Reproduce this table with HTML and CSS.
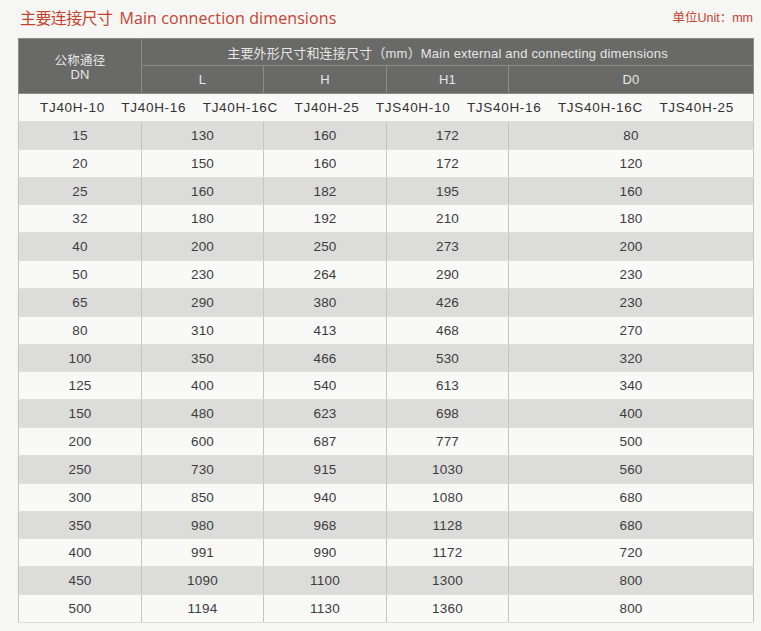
FILE: index.html
```html
<!DOCTYPE html>
<html lang="zh">
<head>
<meta charset="utf-8">
<title>主要连接尺寸</title>
<link rel="stylesheet" href="styles.css">
</head>
<body>
<div class="page">
  <div class="head">
    <h1 class="title"><span class="title-cn">主要连接尺寸</span><span class="title-en">Main connection dimensions</span></h1>
    <div class="unit">单位Unit：mm</div>
  </div>
  <table class="spec">
    <colgroup>
      <col class="c1"><col class="c2"><col class="c3"><col class="c4"><col class="c5">
    </colgroup>
    <thead>
      <tr class="h1row">
        <th rowspan="2" class="dn"><span class="dn-line">公称通径</span><span class="dn-line">DN</span></th>
        <th colspan="4">主要外形尺寸和连接尺寸（mm）Main external and connecting dimensions</th>
      </tr>
      <tr class="h2row">
        <th>L</th><th>H</th><th>H1</th><th>D0</th>
      </tr>
    </thead>
    <tbody>
      <tr class="models">
        <td colspan="5">
          <div class="model-list">
            <span>TJ40H-10</span><span>TJ40H-16</span><span>TJ40H-16C</span><span>TJ40H-25</span><span>TJS40H-10</span><span>TJS40H-16</span><span>TJS40H-16C</span><span>TJS40H-25</span>
          </div>
        </td>
      </tr>
      <tr class="odd"><td>15</td><td>130</td><td>160</td><td>172</td><td>80</td></tr>
      <tr><td>20</td><td>150</td><td>160</td><td>172</td><td>120</td></tr>
      <tr class="odd"><td>25</td><td>160</td><td>182</td><td>195</td><td>160</td></tr>
      <tr><td>32</td><td>180</td><td>192</td><td>210</td><td>180</td></tr>
      <tr class="odd"><td>40</td><td>200</td><td>250</td><td>273</td><td>200</td></tr>
      <tr><td>50</td><td>230</td><td>264</td><td>290</td><td>230</td></tr>
      <tr class="odd"><td>65</td><td>290</td><td>380</td><td>426</td><td>230</td></tr>
      <tr><td>80</td><td>310</td><td>413</td><td>468</td><td>270</td></tr>
      <tr class="odd"><td>100</td><td>350</td><td>466</td><td>530</td><td>320</td></tr>
      <tr><td>125</td><td>400</td><td>540</td><td>613</td><td>340</td></tr>
      <tr class="odd"><td>150</td><td>480</td><td>623</td><td>698</td><td>400</td></tr>
      <tr><td>200</td><td>600</td><td>687</td><td>777</td><td>500</td></tr>
      <tr class="odd"><td>250</td><td>730</td><td>915</td><td>1030</td><td>560</td></tr>
      <tr><td>300</td><td>850</td><td>940</td><td>1080</td><td>680</td></tr>
      <tr class="odd"><td>350</td><td>980</td><td>968</td><td>1128</td><td>680</td></tr>
      <tr><td>400</td><td>991</td><td>990</td><td>1172</td><td>720</td></tr>
      <tr class="odd"><td>450</td><td>1090</td><td>1100</td><td>1300</td><td>800</td></tr>
      <tr><td>500</td><td>1194</td><td>1130</td><td>1360</td><td>800</td></tr>
    </tbody>
  </table>
</div>
</body>
</html>
```

FILE: styles.css
```css
html, body {
  margin: 0;
  padding: 0;
  background: #f6f6f5;
}

.page {
  padding: 0 8px 0 18px;
  font-family: "Liberation Sans", Arial, "Noto Sans CJK SC", sans-serif;
  color: #3a3a3a;
}

.head {
  height: 38px;
  display: flex;
  justify-content: space-between;
  align-items: flex-start;
}

.title {
  margin: 7px 0 0 2px;
  font-size: 16px;
  font-weight: normal;
  color: #c4432f;
  font-family: "Open Sans", "Noto Sans CJK SC", sans-serif;
  line-height: 20px;
  letter-spacing: 0.1px;
}

.title-cn {
  font-family: "Noto Sans CJK SC", sans-serif;
  margin-right: 7px;
  letter-spacing: -0.6px;
}

.unit {
  margin-top: 10px;
  font-size: 12.5px;
  color: #c4432f;
  font-family: "Liberation Sans", "Noto Sans CJK SC", sans-serif;
  line-height: 16px;
}

.spec {
  width: 735px;
  border-collapse: collapse;
  table-layout: fixed;
  border: 1px solid #cfcfcd;
}

.c1 { width: 123px; }
.c2 { width: 122px; }
.c3 { width: 123px; }
.c4 { width: 122px; }
.c5 { width: 245px; }

.spec th {
  background: #696967;
  color: #e6e6e4;
  font-weight: normal;
  font-size: 13px;
  letter-spacing: 0.2px;
  border: 1px solid #8c8c8a;
  padding: 0;
  text-align: center;
  font-family: "Liberation Sans", "Noto Sans CJK SC", sans-serif;
}

.h1row th { height: 26px; }
.h2row th { height: 27px; }

.spec th.dn {
  padding-top: 3px;
  vertical-align: middle;
}

.dn-line {
  display: block;
  line-height: 14px;
}

.dn-line:first-child {
  font-size: 12.5px;
}

.spec td {
  height: 26.83px;
  padding: 0;
  text-align: center;
  font-size: 13.5px;
  letter-spacing: 0.2px;
  color: #3c3c3c;
  background: #f9f9f8;
  border-left: 1px solid #c4c4c2;
  border-right: 1px solid #c4c4c2;
  border-bottom: 1px solid #dededc;
}

.spec tr.odd td {
  background: #dcdcda;
}

.spec tr.models td {
  height: 27px;
  background: #f9f9f8;
}

.model-list {
  display: flex;
  justify-content: space-between;
  padding: 0 19px 0 21px;
  font-size: 13.5px;
  letter-spacing: 0.7px;
  color: #333;
}
```
